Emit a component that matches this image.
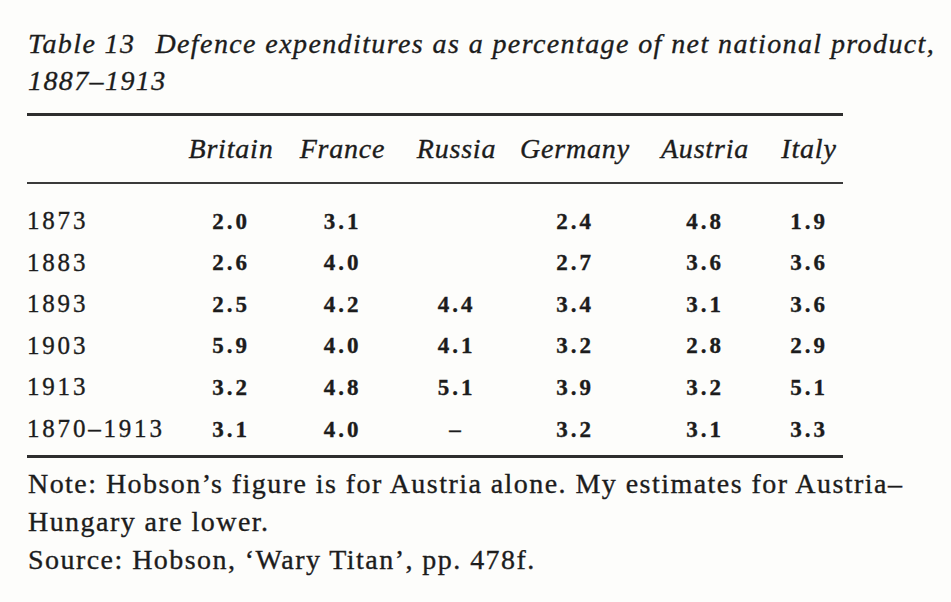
import React from 'react';

const countries = ['Britain', 'France', 'Russia', 'Germany', 'Austria', 'Italy'];

const rows: { year: string; values: string[] }[] = [
    { year: '1873', values: ['2.0', '3.1', '', '2.4', '4.8', '1.9'] },
    { year: '1883', values: ['2.6', '4.0', '', '2.7', '3.6', '3.6'] },
    { year: '1893', values: ['2.5', '4.2', '4.4', '3.4', '3.1', '3.6'] },
    { year: '1903', values: ['5.9', '4.0', '4.1', '3.2', '2.8', '2.9'] },
    { year: '1913', values: ['3.2', '4.8', '5.1', '3.9', '3.2', '5.1'] },
    { year: '1870–1913', values: ['3.1', '4.0', '–', '3.2', '3.1', '3.3'] },
];

const cols = 'grid grid-cols-[148px_112px_111px_117px_120px_140px_68px] items-center';

const App: React.FC = () => {
    return (
        <div className="w-[951px] h-[602px] bg-[#fdfdfb] text-[#1c1c1c] overflow-hidden font-['Liberation_Serif',serif] [-webkit-text-stroke:0.35px_#1c1c1c]">
            {/* Caption */}
            <div className="pl-[28px] pt-[25px] italic text-[28px] leading-[37px] tracking-[1.4px]">
                <div>
                    Table 13<span className="inline-block w-[20px]"></span>Defence expenditures as a percentage of net national product,
                </div>
                <div>1887–1913</div>
            </div>

            {/* Table */}
            <div className="ml-[27px] mt-[14px] w-[816px]">
                <div className="h-[3px] bg-[#2e2e2e]"></div>
                <div className={`${cols} h-[66px] italic text-[28px] tracking-[0.8px]`}>
                    <div></div>
                    {countries.map((c) => (
                        <div key={c} className="text-center">{c}</div>
                    ))}
                </div>
                <div className="h-[2px] bg-[#3a3a3a]"></div>
                <div className="pt-[16px] pb-[5px]">
                    {rows.map((r) => (
                        <div key={r.year} className={`${cols} h-[41.6px]`}>
                            <div className="text-[25px] tracking-[2.8px]">{r.year}</div>
                            {r.values.map((v, i) => (
                                <div key={i} className="text-center font-bold text-[23px] tracking-[3px] pt-[2px]">{v}</div>
                            ))}
                        </div>
                    ))}
                </div>
                <div className="h-[3px] bg-[#2e2e2e]"></div>
            </div>

            {/* Notes */}
            <div className="pl-[28px] pt-[7px] text-[28px] leading-[38px] tracking-[1.45px]">
                <div>Note: Hobson’s figure is for Austria alone. My estimates for Austria–</div>
                <div>Hungary are lower.</div>
                <div>Source: Hobson, ‘Wary Titan’, pp. 478f.</div>
            </div>
        </div>
    );
};

export default App;
